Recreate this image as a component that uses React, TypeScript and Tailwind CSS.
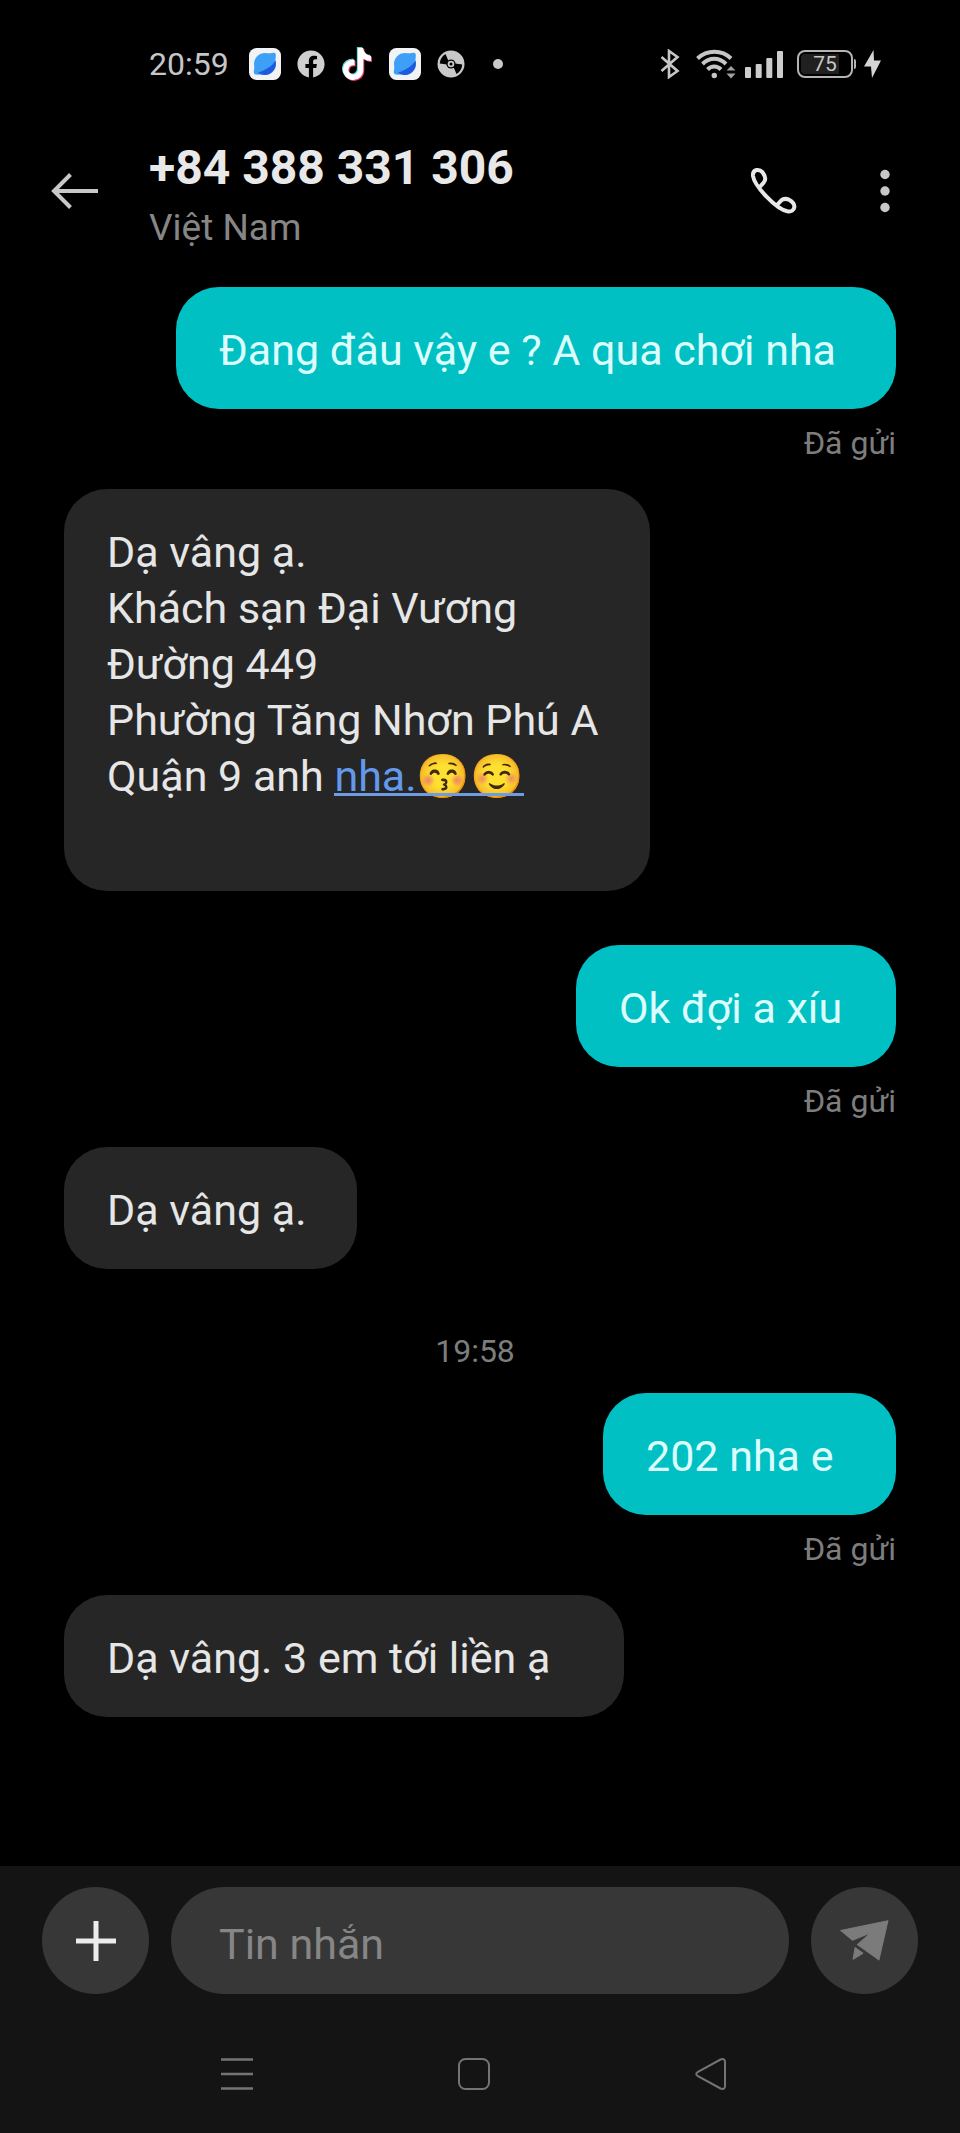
import type { ReactNode } from "react";
import { FaFacebook, FaTiktok } from "react-icons/fa";

function PlanetIcon() {
  return (
    <svg viewBox="0 0 32 32" className="size-8" aria-hidden="true">
      <rect width="32" height="32" rx="7.5" fill="#f1f3f5" />
      <circle cx="16" cy="16" r="11" fill="#3d9ff5" />
      <path d="M18 5.500C21 5.500 24 4 26 5C27.500 6.500 26.500 9 26.500 12ZM5.500 18C5.500 21 4 24 5.500 26C7.500 27 10 26.500 13 26.500Z" fill="#3d9ff5" />
      <path d="M26.500 12.500C28.500 20 22.500 27.200 15.500 27C13 27 10.500 26 9 24.500C16 22.500 23.500 18 26.500 12.500Z" fill="#1f5ade" />
    </svg>
  );
}

function TiktokIcon() {
  return (
    <span className="relative mx-[2px] block h-8 w-7" aria-hidden="true">
      <FaTiktok className="absolute -top-px left-[-1px] h-8 w-7 text-[#5fd6d4]" />
      <FaTiktok className="absolute top-px left-px h-8 w-7 text-[#e0385f]" />
      <FaTiktok className="absolute top-0 left-0 h-8 w-7 text-white" />
    </span>
  );
}

function DiscIcon() {
  return (
    <svg viewBox="0 0 28 28" className="size-7" aria-hidden="true">
      <circle cx="14" cy="14" r="13.500" fill="#c9c9c9" />
      <path d="M11.500 11L8.500 4C5 6 3 9.500 2.800 13.500L10 14.500C10 13 10.500 11.800 11.500 11Z" fill="#000" />
      <path d="M16.500 17L19.500 24C23 22 25 18.500 25.200 14.500L18 13.500C18 15 17.500 16.200 16.500 17Z" fill="#000" />
      <circle cx="14" cy="14" r="4.600" fill="#000" />
      <circle cx="14" cy="14" r="3.300" fill="#c9c9c9" />
      <circle cx="14" cy="14" r="1.500" fill="#000" />
    </svg>
  );
}

function StatusBar() {
  return (
    <div className="flex h-24 items-center justify-between pt-8 pr-[79px] pl-[149px] text-[#c6c6c6]">
      <div className="flex items-center">
        <time className="w-[100px] text-[32px] leading-8">20:59</time>
        <div className="flex items-center gap-4">
          <PlanetIcon />
          <FaFacebook className="size-7 text-[#cfcfcf]" aria-hidden="true" />
          <TiktokIcon />
          <PlanetIcon />
          <DiscIcon />
          <span className="ml-3 size-[10px] rounded-full bg-[#c9c9c9]" />
        </div>
      </div>
      <div className="flex items-center">
        <svg viewBox="0 0 20 30" className="mr-4 h-[30px] w-5" fill="none" stroke="currentColor" strokeWidth="2.600" aria-hidden="true">
          <path d="M1.500 8L17.500 22L9 28V2L17.500 8L1.500 22" />
        </svg>
        <svg viewBox="0 0 40 30" className="mr-[9px] h-[30px] w-10" fill="none" stroke="currentColor" strokeWidth="4" aria-hidden="true">
          <path d="M1.500 9.500C11 0.500 26 0.500 35 9.500" />
          <path d="M6.500 15C13.500 8 23 8 30 15" />
          <path d="M11.500 20.500C15.500 16.500 21 16.500 25 20.500" />
          <circle cx="18.300" cy="26.500" r="2.700" fill="currentColor" stroke="none" />
          <path d="M30.500 21.500L35 17L39.500 21.500ZM30.500 24.500L35 29.500L39.500 24.500Z" fill="#a0a0a0" stroke="none" />
        </svg>
        <svg viewBox="0 0 38 27" className="mr-[14px] h-[27px] w-[38px]" fill="#cccccc" aria-hidden="true">
          <rect x="0" y="16" width="6" height="11" rx="1" />
          <rect x="10.700" y="13" width="6" height="14" rx="1" />
          <rect x="21.300" y="7" width="6" height="20" rx="1" />
          <rect x="32" y="0" width="6" height="27" rx="1" />
        </svg>
        <div className="flex items-center">
          <div className="flex h-7 w-14 rounded-[8px] border-2 border-[#b4b4b4] p-[2px]">
            <span className="flex w-full items-center justify-center rounded-[4px] bg-linear-to-r from-[#202020] from-80% to-black to-80% text-[21px] leading-5">
              75
            </span>
          </div>
          <span className="ml-px h-[10px] w-[2px] rounded-r bg-[#b4b4b4]" />
        </div>
        <svg viewBox="0 0 17 28" className="ml-2 h-7 w-[17px]" fill="#d4d4d4" aria-hidden="true">
          <path d="M9.500 0L0 16.500H7L8 28L17 10.500H10Z" />
        </svg>
      </div>
    </div>
  );
}

function Header() {
  return (
    <header className="flex h-[189px] items-center pr-[67px] pl-[51px]">
      <button type="button" aria-label="Quay lại" className="mr-[50px]">
        <svg viewBox="0 0 48 36" className="h-9 w-12" fill="none" stroke="#c8c8c8" strokeWidth="4" aria-hidden="true">
          <path d="M47 18H3M19.500 1.500L3 18L19.500 34.500" />
        </svg>
      </button>
      <div className="min-w-0 flex-1 pt-2">
        <h1 className="text-[48px] leading-[56px] font-bold text-[#e8e8e8]">+84 388 331 306</h1>
        <p className="mt-[10px] text-[37px] leading-[44px] text-[#868686]">Việt Nam</p>
      </div>
      <button type="button" aria-label="Gọi">
        <svg viewBox="0 0 141 141" className="size-[47px]" fill="none" stroke="#e8e8e8" strokeWidth="12" strokeLinejoin="round" aria-hidden="true">
          <path d="M29 60L41 47C49 38 46 28 39 18C33 9 26 8 20 9C11 11 8 18 9 27C14 58 78 126 112 133C124 135 132 130 133 120C134 110 126 103 117 98C107 94 101 94 94 100L81 114" />
        </svg>
      </button>
      <button type="button" aria-label="Tùy chọn khác" className="ml-[80px]">
        <svg viewBox="0 0 16 44" className="h-11 w-4" fill="#c8c8c8" aria-hidden="true">
          <circle cx="8" cy="5.500" r="4.700" />
          <circle cx="8" cy="22" r="4.700" />
          <circle cx="8" cy="38.500" r="4.700" />
        </svg>
      </button>
    </header>
  );
}

function Sent({ width, children }: { width: string; children: ReactNode }) {
  return (
    <div className="mb-[26px] flex flex-col items-end">
      <p className={`${width} max-w-full rounded-[43px] bg-[#01c0c3] pt-[35px] pb-[31px] pl-[43px] text-[43px] leading-[56px] text-[#dcfdfd]`}>
        {children}
      </p>
      <span className="mt-[14px] text-[32px] leading-10 text-[#7d7d7d]">Đã gửi</span>
    </div>
  );
}

function Received({ width, children }: { width: string; children: ReactNode }) {
  return (
    <div className={`${width} max-w-full rounded-[43px] bg-[#262626] pt-[35px] pb-[31px] pl-[43px] text-[43px] leading-[56px] text-[#e6e6e6]`}>
      {children}
    </div>
  );
}

function Composer() {
  return (
    <form className="flex items-center gap-[22px] px-[42px] pt-[21px]" onSubmit={(e) => e.preventDefault()}>
      <button type="button" aria-label="Thêm" className="flex size-[107px] shrink-0 items-center justify-center rounded-full bg-[#373737]">
        <svg viewBox="0 0 40 40" className="size-10" stroke="#ececec" strokeWidth="5" aria-hidden="true">
          <path d="M20 0V40M0 20H40" />
        </svg>
      </button>
      <input
        type="text"
        aria-label="Tin nhắn"
        placeholder="Tin nhắn"
        className="h-[107px] min-w-0 flex-1 rounded-full bg-[#373737] px-12 pt-1.5 text-[43px] text-[#e6e6e6] outline-none placeholder:text-[#868686]"
      />
      <button type="submit" aria-label="Gửi" className="flex size-[107px] shrink-0 items-center justify-center rounded-full bg-[#373737]">
        <svg viewBox="0 0 146 122" className="h-[41px] w-[49px]" fill="#7b7b7b" stroke="#7b7b7b" strokeWidth="3" strokeLinejoin="round" aria-hidden="true">
          <path d="M2 31L143 2L116 119L52 73L93 37L37 60Z" />
          <path d="M45 82L68 99L39 117Z" />
        </svg>
      </button>
    </form>
  );
}

function NavBar() {
  return (
    <nav className="grid h-[139px] grid-cols-3 items-center justify-items-center pt-[21px] pr-[130px] pl-[118px]">
      <button type="button" aria-label="Ứng dụng gần đây">
        <svg viewBox="0 0 32 32" className="size-8" stroke="#747474" strokeWidth="2.600" aria-hidden="true">
          <path d="M0 1.500H32M0 16H32M0 30.500H32" />
        </svg>
      </button>
      <button type="button" aria-label="Màn hình chính">
        <svg viewBox="0 0 32 32" className="size-8" fill="none" stroke="#747474" strokeWidth="2" aria-hidden="true">
          <rect x="1" y="1" width="30" height="30" rx="6.500" />
        </svg>
      </button>
      <button type="button" aria-label="Trở về">
        <svg viewBox="0 0 32 32" className="size-8" fill="none" stroke="#747474" strokeWidth="2" aria-hidden="true">
          <path d="M2.500 14.200L25.500 1.500Q30 0 30 4V28Q30 32 25.500 30.500L2.500 17.800Q0 16 2.500 14.200Z" />
        </svg>
      </button>
    </nav>
  );
}

export default function App() {
  return (
    <div className="flex min-h-screen flex-col bg-black font-[Roboto,'Noto_Color_Emoji',sans-serif]">
      <StatusBar />
      <Header />
      <main className="flex flex-1 flex-col px-16 pt-[2px]">
        <Sent width="w-[720px]">Đang đâu vậy e ? A qua chơi nha</Sent>
        <div className="mb-[54px]">
          <Received width="w-[586px]">
            <p>Dạ vâng ạ.</p>
            <p>Khách sạn Đại Vương</p>
            <p>Đường 449</p>
            <p>Phường Tăng Nhơn Phú A</p>
            <p className="mb-14">
              Quận 9 anh{" "}
              <a href="#nha" className="relative inline-block text-[#6399ea] after:absolute after:inset-x-0 after:bottom-2 after:h-[3px] after:bg-[#6f9be0]">
                nha.😚☺️
              </a>
            </p>
          </Received>
        </div>
        <Sent width="w-[320px]">Ok đợi a xíu</Sent>
        <Received width="w-[293px]">Dạ vâng ạ.</Received>
        <time className="mt-[62px] mb-[22px] pr-[10px] text-center text-[32px] leading-10 text-[#7d7d7d]">19:58</time>
        <Sent width="w-[293px]">202 nha e</Sent>
        <Received width="w-[560px]">Dạ vâng. 3 em tới liền ạ</Received>
      </main>
      <footer className="bg-[#141414]">
        <Composer />
        <NavBar />
      </footer>
    </div>
  );
}
